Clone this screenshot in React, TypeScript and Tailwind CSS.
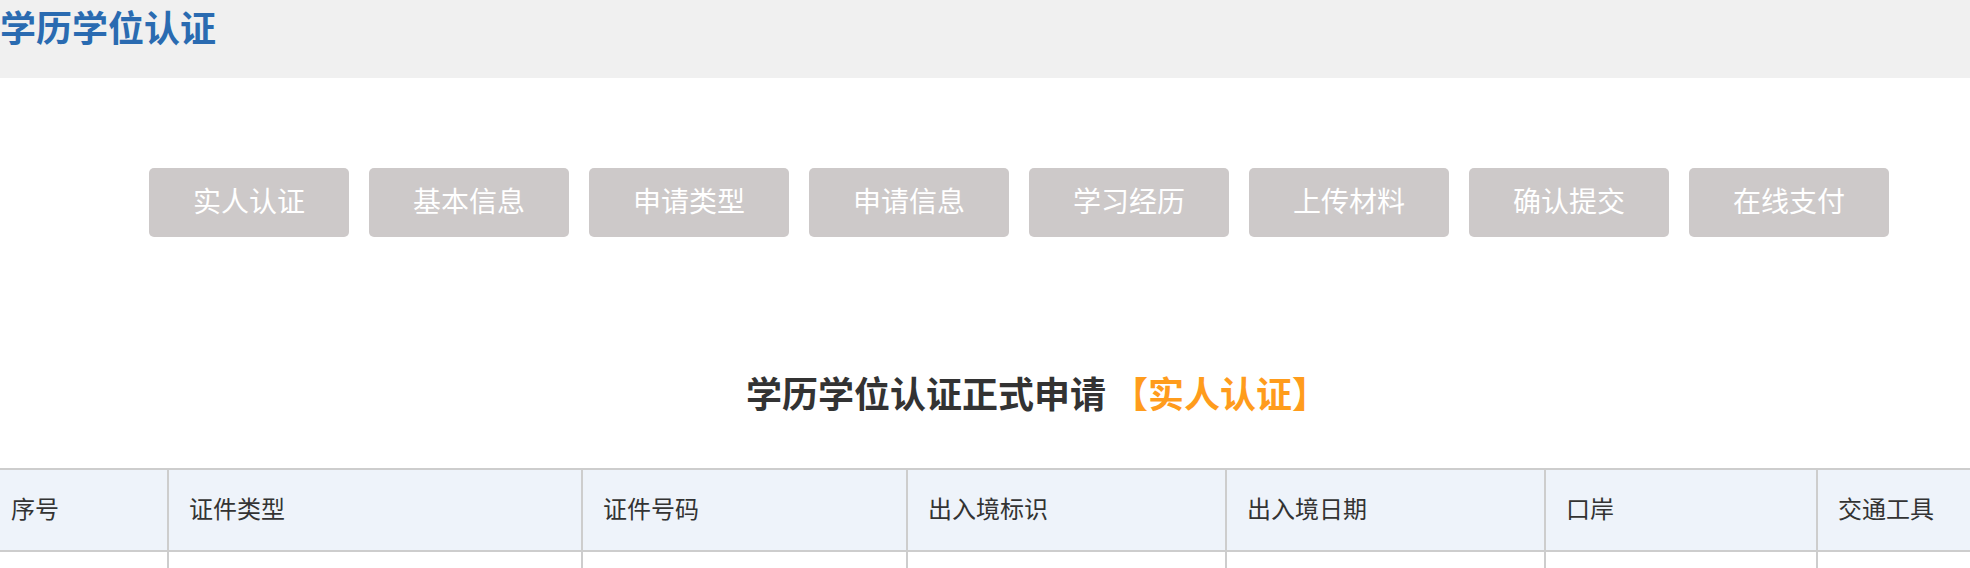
import React from 'react';

const steps = ['实人认证', '基本信息', '申请类型', '申请信息', '学习经历', '上传材料', '确认提交', '在线支付'];

const columns = ['序号', '证件类型', '证件号码', '出入境标识', '出入境日期', '口岸', '交通工具'];

const App = () => {
  return (
    <div className="min-h-screen w-full overflow-hidden bg-white font-['Liberation_Sans','Noto_Sans_CJK_SC',sans-serif]">
      {/* page header */}
      <header className="h-[78px] bg-[#f0f0f0] pt-[12px]">
        <h1 className="text-[36px] leading-[36px] font-bold text-[#2a6bb1]">学历学位认证</h1>
      </header>

      {/* step buttons */}
      <div className="mt-[90px] flex gap-[20px] pl-[149px]">
        {steps.map((s) => (
          <button
            key={s}
            className="flex h-[69px] w-[200px] items-center justify-center rounded-[5px] bg-[#cdc9c9] text-[28px] text-white"
          >
            {s}
          </button>
        ))}
      </div>

      {/* form title */}
      <div className="mt-[141px] flex justify-center pl-[104px]">
        <h2 className="text-[36px] leading-[36px] font-bold text-[#333333]">
          学历学位认证正式申请
          <span className="ml-[6px] text-[#ff9c1c]">【实人认证】</span>
        </h2>
      </div>

      {/* table */}
      <div className="mt-[54px] w-full">
        <div className="grid h-[84px] grid-cols-[167px_414px_325px_319px_319px_272px_1fr] border-y-2 border-[#cdcdcd] bg-[#eef3fa] text-[24px] text-[#333333]">
          {columns.map((c, i) => (
            <div
              key={c}
              className={i === 0 ? 'flex items-center pl-[11px]' : 'flex items-center border-l-2 border-[#cdcdcd] pl-5'}
            >
              {c}
            </div>
          ))}
        </div>
        <div className="grid h-[80px] grid-cols-[167px_414px_325px_319px_319px_272px_1fr]">
          {columns.map((c, i) => (
            <div key={c} className={i === 0 ? '' : 'border-l-2 border-[#cdcdcd]'} />
          ))}
        </div>
      </div>
    </div>
  );
};

export default App;
